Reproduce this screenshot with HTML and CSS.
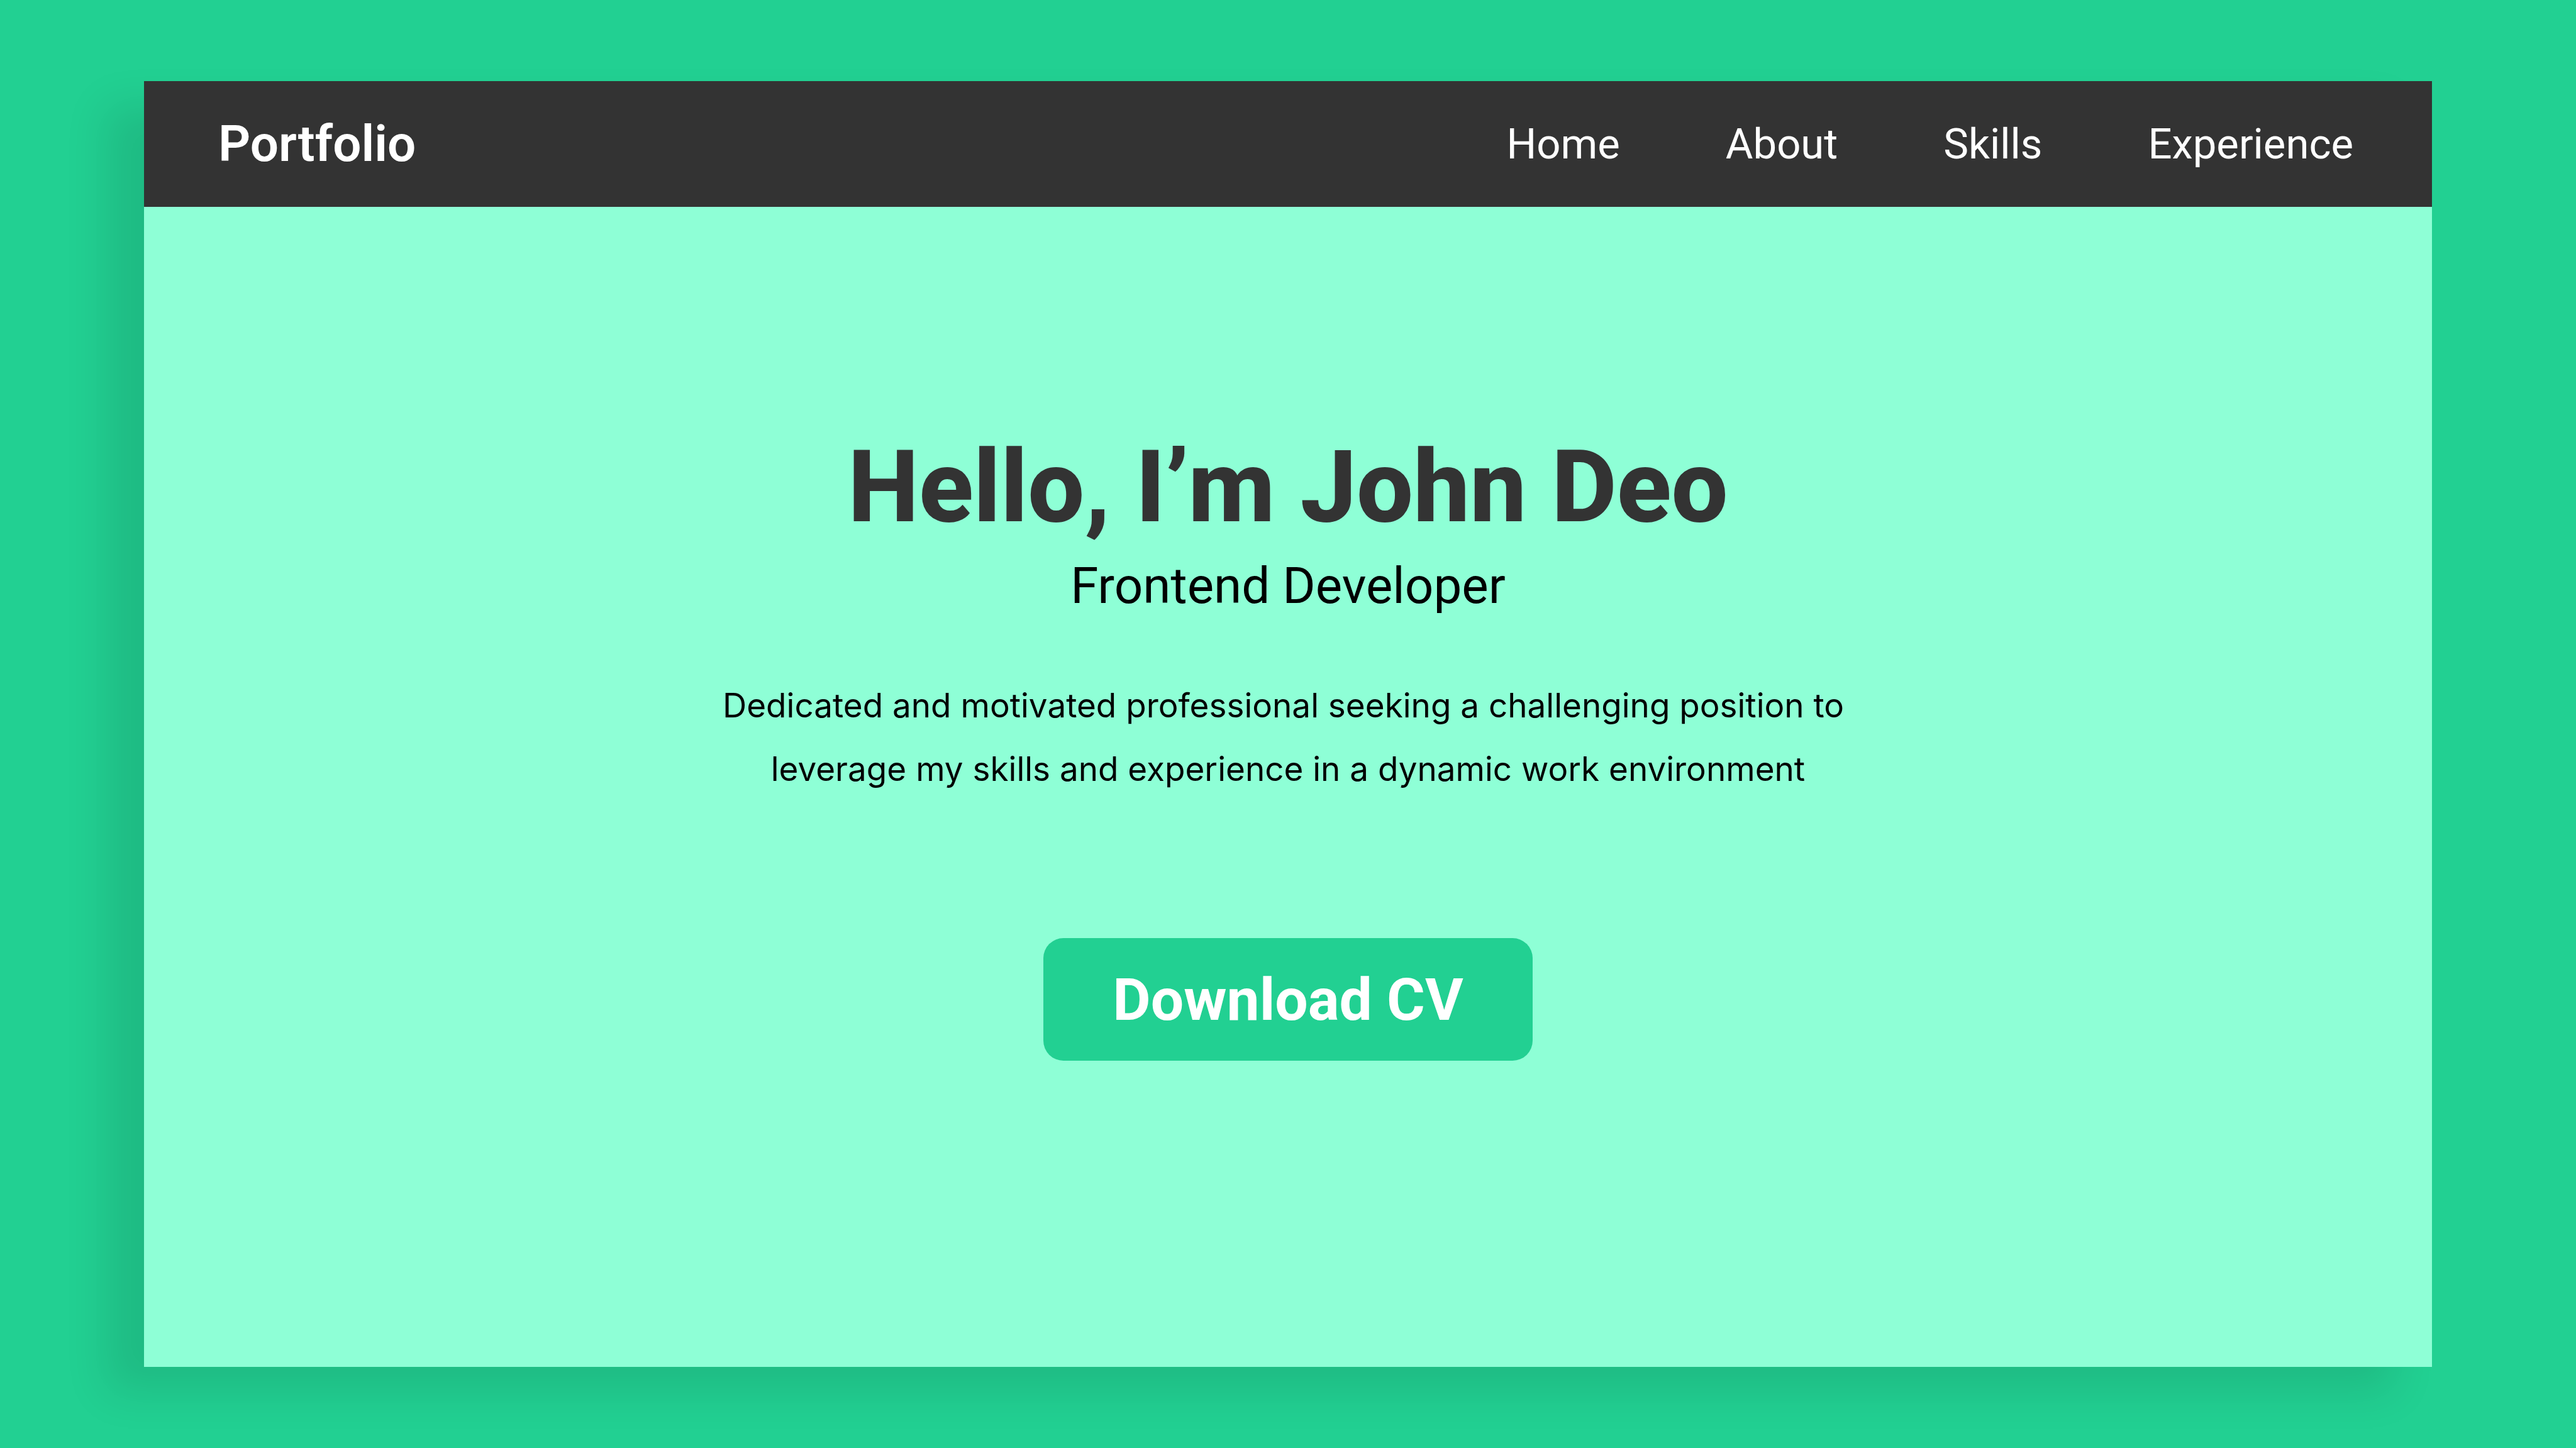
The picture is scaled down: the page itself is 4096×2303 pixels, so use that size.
FILE: index.html
```html
<!DOCTYPE html>
<html lang="en">
<head>
<meta charset="utf-8">
<meta name="viewport" content="width=device-width, initial-scale=1">
<title>Portfolio</title>
<link rel="stylesheet" href="styles.css">
</head>
<body class="page">
<div class="card">
  <header class="header">
    <a class="brand" href="#">Portfolio</a>
    <nav class="nav" aria-label="Main">
      <a class="nav-link" href="#home">Home</a>
      <a class="nav-link" href="#about">About</a>
      <a class="nav-link" href="#skills">Skills</a>
      <a class="nav-link" href="#experience">Experience</a>
    </nav>
  </header>
  <main class="hero" id="home">
    <h1 class="title">Hello, I’m John Deo</h1>
    <p class="role">Frontend Developer</p>
    <p class="summary">Dedicated and motivated professional seeking a challenging position to&nbsp;<br>leverage my skills and experience in a dynamic work environment</p>
    <button class="download" type="button">Download CV</button>
  </main>
</div>
</body>
</html>
```

FILE: styles.css
```css
* {
  box-sizing: border-box;
}

.page {
  display: flex;
  min-height: 100vh;
  margin: 0;
  padding: 129px 229px;
  background: #22d092;
  font-family: Roboto, "Liberation Sans", sans-serif;
}

.card {
  display: flex;
  flex: 1;
  flex-direction: column;
  background: #8effd6;
  box-shadow: -60px 40px 64px rgba(0, 0, 0, 0.1);
}

.header {
  display: flex;
  align-items: center;
  justify-content: space-between;
  min-height: 200px;
  padding: 0 125px 0 118px;
  background: #333333;
}

.brand,
.nav-link {
  color: #ffffff;
  text-decoration: none;
}

.brand {
  font-size: 80px;
  font-weight: 600;
  line-height: 94px;
}

.nav {
  display: flex;
  gap: 168px;
}

.nav-link {
  font-size: 67px;
  line-height: 78px;
}

.hero {
  display: flex;
  flex: 1;
  flex-direction: column;
  align-items: center;
  padding: 352px 64px 64px;
  text-align: center;
}

.title,
.role,
.summary {
  margin: 0;
}

.title {
  color: #333333;
  font-size: 160px;
  font-weight: 800;
  line-height: 188px;
}

.role {
  margin-top: 16px;
  color: #000000;
  font-size: 80px;
  line-height: 94px;
}

.summary {
  margin-top: 93px;
  color: #000000;
  font-family: Inter, "Liberation Sans", sans-serif;
  font-size: 53px;
  font-weight: 400;
  line-height: 101px;
}

.download {
  margin-top: 218px;
  padding: 44px 110px 41px;
  border: 0;
  border-radius: 32px;
  background: #22d092;
  color: #ffffff;
  font-family: inherit;
  font-size: 93px;
  font-weight: 700;
  line-height: 110px;
}
```
